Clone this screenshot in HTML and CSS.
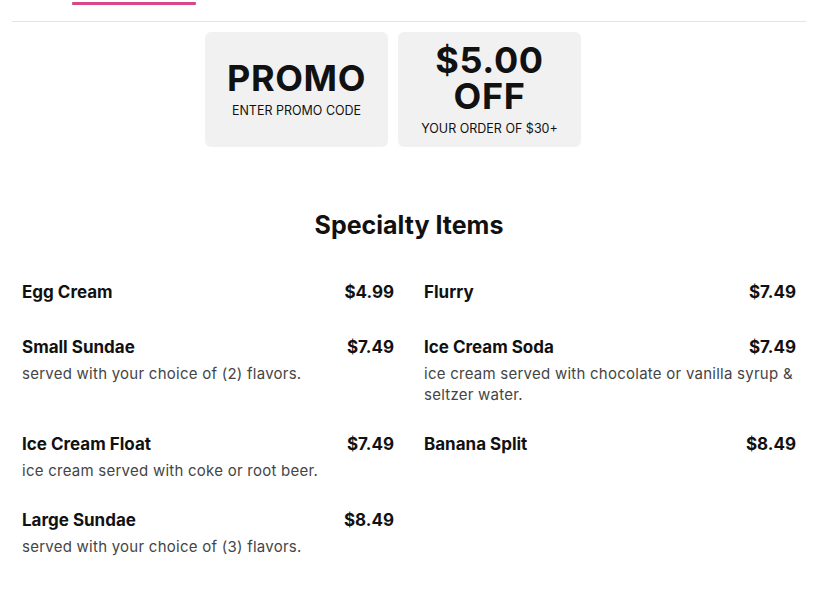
FILE: index.html
```html
<!DOCTYPE html>
<html>
<head>
<meta charset="utf-8">
<link rel="stylesheet" href="styles.css">
</head>
<body>
<div class="page">
  <div class="tabs">
    <div class="tab-indicator"></div>
  </div>
  <div class="promos">
    <div class="promo">
      <div class="promo-big">PROMO</div>
      <div class="promo-small">ENTER PROMO CODE</div>
    </div>
    <div class="promo">
      <div class="promo-big">$5.00</div>
      <div class="promo-big">OFF</div>
      <div class="promo-small">YOUR ORDER OF $30+</div>
    </div>
  </div>
  <h2 class="section-title">Specialty Items</h2>
  <div class="items">
    <div class="item">
      <div class="item-head"><span class="name">Egg Cream</span><span class="price">$4.99</span></div>
    </div>
    <div class="item">
      <div class="item-head"><span class="name">Flurry</span><span class="price">$7.49</span></div>
    </div>
    <div class="item">
      <div class="item-head"><span class="name">Small Sundae</span><span class="price">$7.49</span></div>
      <div class="desc">served with your choice of (2) flavors.</div>
    </div>
    <div class="item">
      <div class="item-head"><span class="name">Ice Cream Soda</span><span class="price">$7.49</span></div>
      <div class="desc">ice cream served with chocolate or vanilla syrup &amp; seltzer water.</div>
    </div>
    <div class="item">
      <div class="item-head"><span class="name">Ice Cream Float</span><span class="price">$7.49</span></div>
      <div class="desc">ice cream served with coke or root beer.</div>
    </div>
    <div class="item">
      <div class="item-head"><span class="name">Banana Split</span><span class="price">$8.49</span></div>
    </div>
    <div class="item">
      <div class="item-head"><span class="name">Large Sundae</span><span class="price">$8.49</span></div>
      <div class="desc">served with your choice of (3) flavors.</div>
    </div>
  </div>
</div>
</body>
</html>
```

FILE: styles.css
```css
* { box-sizing: border-box; }
html, body { margin: 0; padding: 0; background: #fff; }
body {
  font-family: Inter, "Open Sans", "Liberation Sans", sans-serif;
  color: #111;
}
.page {
  margin: 0 12px;
}
.tabs {
  height: 22px;
  border-bottom: 1px solid #e4e4e4;
  padding-top: 2px;
  padding-left: 60px;
}
.tab-indicator {
  width: 124px;
  height: 3px;
  background: #d9478b;
  border-radius: 1px;
}
.promos {
  display: flex;
  justify-content: center;
  gap: 10px;
  padding-top: 10px;
  padding-right: 32px;
}
.promo {
  width: 183px;
  height: 115px;
  background: #f1f1f1;
  border-radius: 6px;
  display: flex;
  flex-direction: column;
  align-items: center;
  justify-content: center;
  text-align: center;
}
.promo-big {
  font-size: 36px;
  font-weight: 700;
  line-height: 36px;
  letter-spacing: 0.6px;
  color: #111;
}
.promo-small {
  margin-top: 6px;
  font-size: 12.5px;
  line-height: 18px;
  font-weight: 400;
  color: #111;
}
.section-title {
  margin: 0;
  padding-top: 62px;
  font-size: 25px;
  line-height: 32px;
  font-weight: 700;
  text-align: center;
}
.items {
  display: grid;
  grid-template-columns: 1fr 1fr;
  column-gap: 30px;
  row-gap: 25px;
  padding: 37px 10px 0;
}
.item {
  min-height: 30px;
}
.item-head {
  display: flex;
  justify-content: space-between;
  align-items: center;
  height: 28px;
  font-size: 17px;
  font-weight: 700;
}
.desc {
  margin-top: 2px;
  font-size: 15px;
  line-height: 21px;
  letter-spacing: 0.25px;
  color: #454545;
}
```
